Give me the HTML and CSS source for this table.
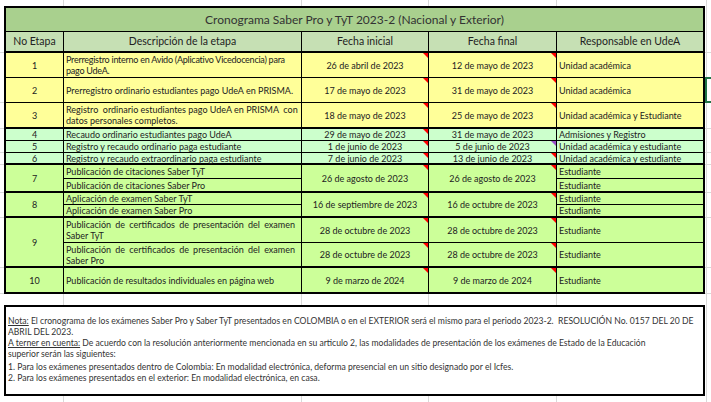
FILE: index.html
```html
<!DOCTYPE html>
<html lang="es">
<head>
<meta charset="utf-8">
<title>Cronograma Saber Pro y TyT 2023-2</title>
<link rel="stylesheet" href="styles.css">
</head>
<body>
<div class="sheet">
  <div class="grid">
    <div class="cell title span5 last">Cronograma Saber Pro y TyT 2023-2 (Nacional y Exterior)</div>

    <div class="cell hd tb">No Etapa</div>
    <div class="cell hd tb">Descripción de la etapa</div>
    <div class="cell hd tb">Fecha inicial</div>
    <div class="cell hd tb">Fecha final</div>
    <div class="cell hd tb last">Responsable en UdeA</div>

    <div class="cell y ctr">1</div>
    <div class="cell y lft tight">Prerregistro interno en Avido (Aplicativo Vicedocencia) para<br>pago UdeA.</div>
    <div class="cell y ctr cm">26 de abril de 2023</div>
    <div class="cell y ctr cm">12 de mayo de 2023</div>
    <div class="cell y lft last">Unidad académica</div>

    <div class="cell y ctr">2</div>
    <div class="cell y lft">Prerregistro ordinario estudiantes pago UdeA en PRISMA.</div>
    <div class="cell y ctr cm">17 de mayo de 2023</div>
    <div class="cell y ctr cm">31 de mayo de 2023</div>
    <div class="cell y lft last">Unidad académica</div>

    <div class="cell y ctr tb">3</div>
    <div class="cell y lft tb pre">Registro  ordinario estudiantes pago UdeA en PRISMA  con<br>datos personales completos.</div>
    <div class="cell y ctr tb cm">18 de mayo de 2023</div>
    <div class="cell y ctr tb cm">25 de mayo de 2023</div>
    <div class="cell y lft tb last">Unidad académica y Estudiante</div>

    <div class="cell m ctr">4</div>
    <div class="cell m lft">Recaudo ordinario estudiantes pago UdeA</div>
    <div class="cell m ctr cm">29 de mayo de 2023</div>
    <div class="cell m ctr">31 de mayo de 2023</div>
    <div class="cell m lft last">Admisiones y Registro</div>

    <div class="cell m ctr">5</div>
    <div class="cell m lft">Registro y recaudo ordinario paga estudiante</div>
    <div class="cell m ctr cm">1 de junio de 2023</div>
    <div class="cell m ctr cm purple">5 de junio de 2023</div>
    <div class="cell m lft last">Unidad académica y estudiante</div>

    <div class="cell m ctr tb">6</div>
    <div class="cell m lft tb">Registro y recaudo extraordinario paga estudiante</div>
    <div class="cell m ctr tb cm">7 de junio de 2023</div>
    <div class="cell m ctr tb cm">13 de junio de 2023</div>
    <div class="cell m lft tb last">Unidad académica y estudiante</div>

    <div class="cell g ctr r2 tb">7</div>
    <div class="cell g lft">Publicación de citaciones Saber TyT</div>
    <div class="cell g ctr r2 tb cm">26 de agosto de 2023</div>
    <div class="cell g ctr r2 tb cm">26 de agosto de 2023</div>
    <div class="cell g lft last">Estudiante</div>
    <div class="cell g lft tb">Publicación de citaciones Saber Pro</div>
    <div class="cell g lft tb last">Estudiante</div>

    <div class="cell g ctr r2 tb">8</div>
    <div class="cell g lft">Aplicación de examen Saber TyT</div>
    <div class="cell g ctr r2 tb cm">16 de septiembre de 2023</div>
    <div class="cell g ctr r2 tb cm">16 de octubre de 2023</div>
    <div class="cell g lft last">Estudiante</div>
    <div class="cell g lft tb">Aplicación de examen Saber Pro</div>
    <div class="cell g lft tb last">Estudiante</div>

    <div class="cell g ctr r2 tb">9</div>
    <div class="cell g lft"><div class="just"><span class="jl">Publicación de certificados de presentación del examen</span><span>Saber TyT</span></div></div>
    <div class="cell g ctr cm">28 de octubre de 2023</div>
    <div class="cell g ctr cm">28 de octubre de 2023</div>
    <div class="cell g lft last">Estudiante</div>
    <div class="cell g lft tb"><div class="just"><span class="jl">Publicación de certificados de presentación del examen</span><span>Saber Pro</span></div></div>
    <div class="cell g ctr tb cm">28 de octubre de 2023</div>
    <div class="cell g ctr tb cm">28 de octubre de 2023</div>
    <div class="cell g lft tb last">Estudiante</div>

    <div class="cell g ctr tb">10</div>
    <div class="cell g lft tb">Publicación de resultados individuales en página web</div>
    <div class="cell g ctr tb cm">9 de marzo de 2024</div>
    <div class="cell g ctr tb cm">9 de marzo de 2024</div>
    <div class="cell g lft tb last">Estudiante</div>
  </div>

  <div class="note">
    <p><u>Nota:</u> El cronograma de los exámenes Saber Pro y Saber TyT presentados en COLOMBIA o en el EXTERIOR será el mismo para el periodo 2023-2.&nbsp; RESOLUCIÓN No. 0157 DEL 20 DE<br>ABRIL DEL 2023.</p>
    <p><u>A terner en cuenta:</u> De acuerdo con la resolución anteriormente mencionada en su articulo 2, las modalidades de presentación de los exámenes de Estado de la Educación<br>superior serán las siguientes:</p>
    <p class="gap">1. Para los exámenes presentados dentro de Colombia: En modalidad electrónica, deforma presencial en un sitio designado por el Icfes.</p>
    <p>2. Para los exámenes presentados en el exterior: En modalidad electrónica, en casa.</p>
  </div>

  <div class="selection"></div>
</div>
</body>
</html>
```

FILE: styles.css
```css
* { box-sizing: border-box; }

html, body {
  margin: 0;
  padding: 0;
}

body {
  width: 711px;
  height: 402px;
  overflow: hidden;
  font-family: "Lato", "Liberation Sans", sans-serif;
  color: #222;
  background-color: #fff;
  background-image:
    linear-gradient(to right, transparent 63px, #d9d9d9 63px, #d9d9d9 64px, transparent 64px),
    linear-gradient(to right, transparent 301px, #d9d9d9 301px, #d9d9d9 302px, transparent 302px),
    linear-gradient(to right, transparent 428px, #d9d9d9 428px, #d9d9d9 429px, transparent 429px),
    linear-gradient(to right, transparent 556px, #d9d9d9 556px, #d9d9d9 557px, transparent 557px),
    linear-gradient(to right, transparent 706px, #d9d9d9 706px, #d9d9d9 707px, transparent 707px),
    linear-gradient(to bottom, transparent 52px, #d9d9d9 52px, #d9d9d9 53px, transparent 53px),
    linear-gradient(to bottom, transparent 102px, #d9d9d9 102px, #d9d9d9 103px, transparent 103px),
    linear-gradient(to bottom, transparent 128px, #d9d9d9 128px, #d9d9d9 129px, transparent 129px),
    linear-gradient(to bottom, transparent 152px, #d9d9d9 152px, #d9d9d9 153px, transparent 153px),
    linear-gradient(to bottom, transparent 164px, #d9d9d9 164px, #d9d9d9 165px, transparent 165px),
    linear-gradient(to bottom, transparent 192px, #d9d9d9 192px, #d9d9d9 193px, transparent 193px),
    linear-gradient(to bottom, transparent 217px, #d9d9d9 217px, #d9d9d9 218px, transparent 218px),
    linear-gradient(to bottom, transparent 267px, #d9d9d9 267px, #d9d9d9 268px, transparent 268px),
    linear-gradient(to bottom, transparent 293px, #d9d9d9 293px, #d9d9d9 294px, transparent 294px);
}

.sheet {
  position: relative;
  padding: 6px 6px 0 4px;
}

.grid {
  display: grid;
  width: 701px;
  grid-template-columns: 58px 238px 127px 128px 148px;
  grid-template-rows: 24px 21px 25px 25px 26px 12px 12px 12px 14px 14px 12px 13px 25px 25px 26px;
  border-left: 2px solid #000;
  border-top: 2px solid #000;
}

.cell {
  position: relative;
  display: flex;
  align-items: center;
  border-right: 1px solid #000;
  border-bottom: 1px solid #000;
  font-size: 9px;
  line-height: 11px;
  white-space: nowrap;
  overflow: visible;
}

.tb { border-bottom-width: 2px; }
.last { border-right-width: 2px; }
.span5 { grid-column: span 5; }
.r2 { grid-row: span 2; }

.title {
  justify-content: center;
  background: #a9d08e;
  font-size: 12px;
  color: #333;
}

.hd {
  justify-content: center;
  background: #c6e0b4;
  font-size: 10.5px;
  color: #222;
}

.y { background: #ffff99; }
.m { background: #ccffcc; }
.g { background: #ccff99; }

.ctr { justify-content: center; }
.lft { justify-content: flex-start; padding-left: 2px; }
.pre { white-space: pre; }
.tight { letter-spacing: -0.25px; }

.just {
  width: 100%;
  padding-right: 6px;
}
.just span { display: block; }
.jl {
  text-align: justify;
  text-align-last: justify;
}

.cm::after {
  content: "";
  position: absolute;
  top: 0;
  right: 0;
  width: 0;
  height: 0;
  border-top: 5px solid #ff0000;
  border-left: 5px solid transparent;
}
.purple::after { border-top-color: #9b4fc7; }

.note {
  width: 701px;
  height: 91px;
  margin-top: 11px;
  border: 2px solid #000;
  background: #fff;
  padding: 9px 2px 0 2px;
  font-size: 8.6px;
  line-height: 11px;
  color: #333;
  white-space: nowrap;
}
.note p { margin: 0; }
.note .gap { margin-top: 2px; }

.selection {
  position: absolute;
  left: 705px;
  top: 77px;
  width: 12px;
  height: 26px;
  border: 2px solid #217346;
}
```
